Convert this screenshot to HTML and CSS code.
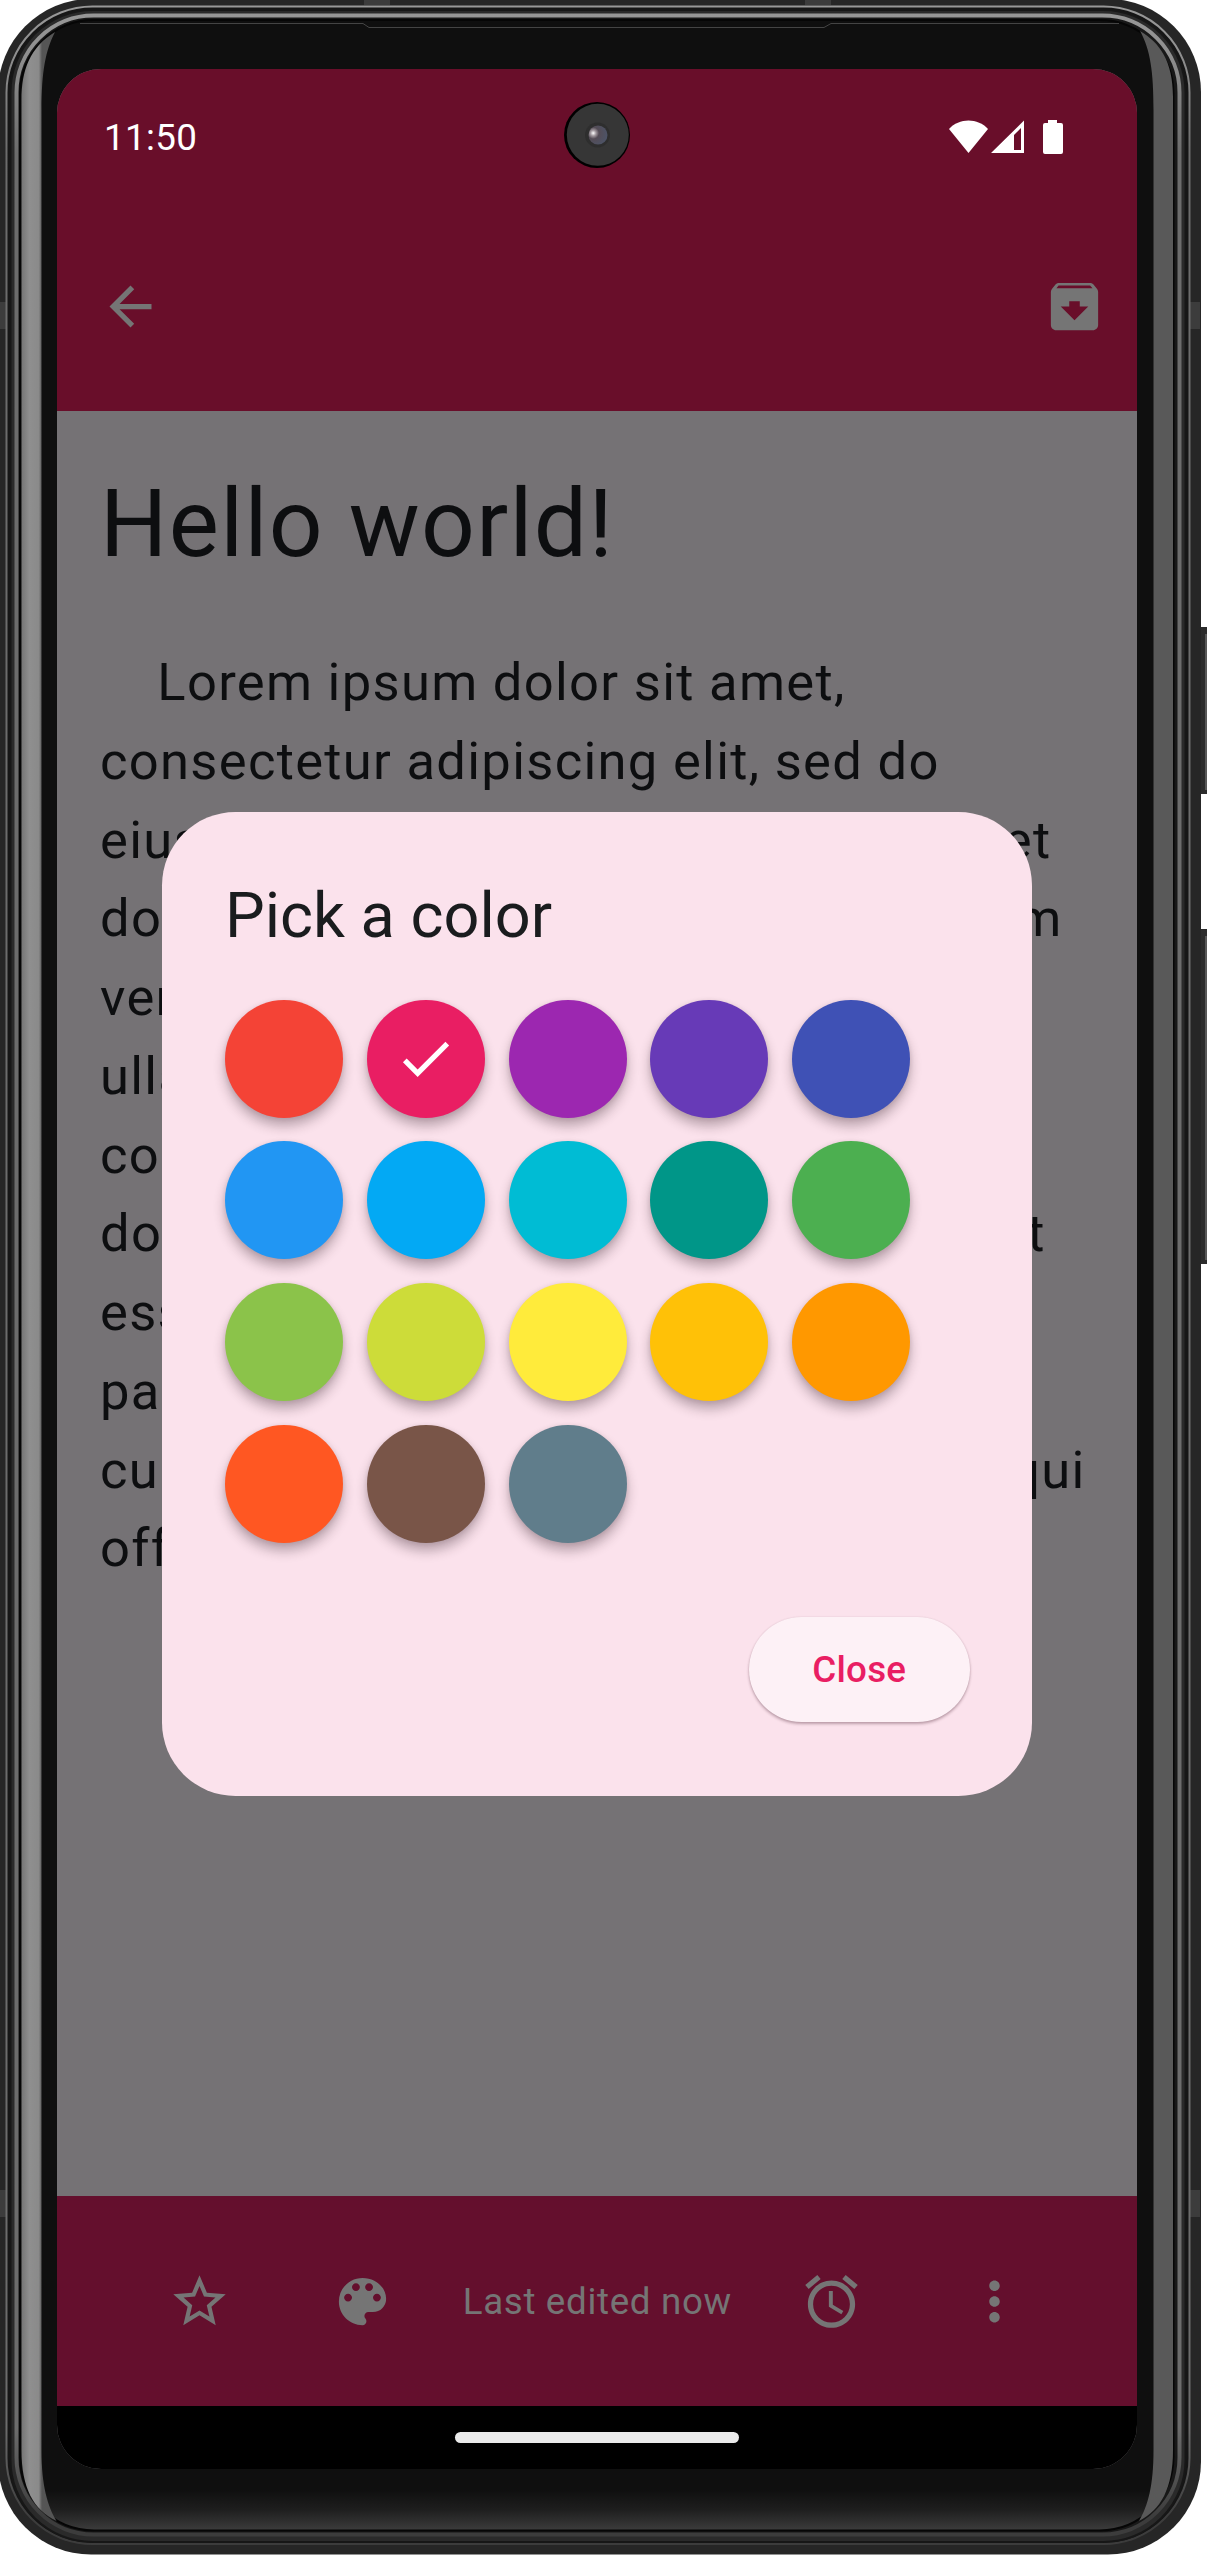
FILE: index.html
```html
<!DOCTYPE html>
<html lang="en">
<head>
<meta charset="utf-8">
<title>Note color picker</title>
<link rel="stylesheet" href="styles.css">
</head>
<body>
<div class="device">
  <svg class="frame" viewBox="0 0 1207 2555" aria-hidden="true">
    <defs>
      <linearGradient id="chin" x1="0" y1="2490" x2="0" y2="2529" gradientUnits="userSpaceOnUse">
        <stop offset="0" stop-color="#0f0f0f"/><stop offset=".5" stop-color="#1e1e1e"/><stop offset="1" stop-color="#3a3a3a"/>
      </linearGradient>
      <linearGradient id="glassL" x1="21" y1="0" x2="42" y2="0" gradientUnits="userSpaceOnUse">
        <stop offset="0" stop-color="#747474"/><stop offset=".4" stop-color="#8f8f8f"/><stop offset=".85" stop-color="#8a8a8a"/><stop offset="1" stop-color="#555"/>
      </linearGradient>
      <linearGradient id="rail" x1="0" y1="0" x2="0" y2="2555" gradientUnits="userSpaceOnUse">
        <stop offset="0" stop-color="#999"/><stop offset=".02" stop-color="#909090"/><stop offset=".06" stop-color="#6c6c6c"/><stop offset=".95" stop-color="#6c6c6c"/><stop offset=".985" stop-color="#3c3c3c"/>
      </linearGradient>
      <radialGradient id="lens" cx=".25" cy=".4" r=".8">
        <stop offset="0" stop-color="#fff"/><stop offset=".18" stop-color="#a39aa0"/><stop offset=".38" stop-color="#544c56"/><stop offset="1" stop-color="#4c5468"/>
      </radialGradient>
    </defs>
    <path d="M1198 627h9v167h-9zM1198 929h9v335h-9z" fill="#2c2c2c"/>
    <path d="M1205 634h2v156h-2zM1205 936h2v324h-2z" fill="#585858"/>
    <rect x="-2" y="-1" width="1203" height="2555.500" rx="93" fill="#262626"/>
    <path d="M0 302h6v27H0zM0 2190h6v27H0zM1190 302h10v27h-10zM1190 2190h10v27h-10zM364 0h26v5h-26zM805 0h26v5h-26z" fill="#3c3c3c"/>
    <rect x="6.500" y="6.500" width="1183" height="2537.500" rx="86" fill="#161616" stroke="url(#rail)" stroke-width="2"/>
    <rect x="10.500" y="10" width="1175" height="2532" rx="82" fill="#2a2a2a" stroke="#171717" stroke-width="2"/>
    <rect x="16.500" y="15.500" width="1163" height="2519" rx="77" fill="#181818" stroke="url(#rail)" stroke-width="4"/>
    <rect x="20" y="20" width="1153.500" height="2510.500" rx="74" fill="url(#chin)" stroke="#060606" stroke-width="2"/>
    <path d="M55 32C30 47 21.500 70 21.500 100V2450c0 38 12 60 35 71-9-15-15-36-15-70V110c0-38 4-60 13.500-78z" fill="url(#glassL)"/>
    <path d="M1140 31c20 12 33 30 33 66V2450c0 38-12 60-34 71 9-15 14.500-36 14.500-70V110c0-38-3-60-13.500-79z" fill="#595959"/>
    <path d="M80 23.500H363l6 4H824l7-4h288" fill="none" stroke="#444"/>
  </svg>

  <main class="screen">
    <header class="top">
      <div class="status">
        <span class="time">11:50</span>
        <svg class="status-icons" viewBox="0 0 115 36">
          <path d="M0 10C10-1.500 29-1.500 39 10L19.500 34z"/>
          <path fill-rule="evenodd" d="M42 34L75 1.500V34zM65 31H72V9L65 16z"/>
          <path d="M99 1h9v3h4q2 0 2 2v27q0 2-2 2H96q-2 0-2-2V6q0-2 2-2h3z"/>
        </svg>
      </div>
      <div class="toolbar">
        <svg class="icon" viewBox="0 0 24 24"><path d="M20 11H7.830l5.590-5.590L12 4l-8 8 8 8 1.410-1.410L7.830 13H20v-2z"/></svg>
        <svg class="icon" viewBox="0 0 24 24"><path d="M20.540 5.230l-1.390-1.680C18.880 3.210 18.470 3 18 3H6c-.47 0-.88.21-1.160.55L3.460 5.230C3.170 5.570 3 6.020 3 6.500V19c0 1.100.9 2 2 2h14c1.100 0 2-.9 2-2V6.500c0-.48-.17-.93-.46-1.270zM12 17.250L6.750 12H10v-2h4v2h3.250L12 17.250zM5.120 5l.81-1h12l.94 1H5.120z"/></svg>
      </div>
    </header>

    <article class="note">
      <h1 class="note-title">Hello world!</h1>
      <p class="note-body">    Lorem ipsum dolor sit amet,
consectetur adipiscing elit, sed do
eiusmod tempor incididunt ut labore et
dolore magna aliqua. Ut enim ad minim
veniam, quis nostrud exercitation
ullamco laboris nisi ut aliquip ex ea
commodo consequat. Duis aute irure
dolor in reprehenderit in voluptate velit
esse cillum dolore eu fugiat nulla
pariatur. Excepteur sint occaecat
cupidatat non proident, sunt in culpa qui
officia deserunt mollit anim</p>
    </article>

    <footer class="bottom">
      <span class="action"><svg class="icon" viewBox="0 0 24 24"><path d="M22 9.240l-7.190-.62L12 2 9.190 8.630 2 9.240l5.460 4.730L5.820 21 12 17.270 18.180 21l-1.630-7.030L22 9.240zM12 15.400l-3.760 2.270 1-4.280-3.320-2.880 4.380-.38L12 6.100l1.710 4.040 4.380.38-3.320 2.880 1 4.280L12 15.400z"/></svg></span>
      <span class="action"><svg class="icon" viewBox="0 0 24 24"><path d="M12 3c-4.970 0-9 4.030-9 9s4.030 9 9 9c.83 0 1.500-.67 1.500-1.500 0-.39-.15-.74-.39-1.010-.23-.26-.38-.61-.38-.99 0-.83.67-1.500 1.500-1.500H16c2.760 0 5-2.240 5-5 0-4.420-4.030-8-9-8zm-5.500 9c-.83 0-1.500-.67-1.500-1.500S5.670 9 6.500 9 8 9.670 8 10.500 7.330 12 6.500 12zm3-4C8.670 8 8 7.330 8 6.500S8.670 5 9.500 5s1.500.67 1.500 1.500S10.330 8 9.500 8zm5 0c-.83 0-1.500-.67-1.500-1.500S13.670 5 14.500 5s1.500.67 1.500 1.500S15.330 8 14.500 8zm3 4c-.83 0-1.500-.67-1.500-1.500S16.670 9 17.500 9s1.500.67 1.500 1.500-.67 1.500-1.500 1.500z"/></svg></span>
      <span class="edited">Last edited now</span>
      <span class="action"><svg class="icon" viewBox="0 0 24 24"><path d="M22 5.720l-4.600-3.860-1.290 1.530 4.600 3.860L22 5.720zM7.880 3.390L6.600 1.860 2 5.710l1.290 1.530 4.590-3.850zM12.500 8H11v6l4.750 2.850.75-1.230-4-2.370V8zM12 4c-4.970 0-9 4.030-9 9s4.020 9 9 9c4.970 0 9-4.030 9-9s-4.030-9-9-9zm0 16c-3.870 0-7-3.130-7-7s3.130-7 7-7 7 3.130 7 7-3.130 7-7 7z"/></svg></span>
      <span class="action"><svg class="icon" viewBox="0 0 24 24"><path d="M12 8c1.100 0 2-.9 2-2s-.9-2-2-2-2 .9-2 2 .9 2 2 2zm0 2c-1.100 0-2 .9-2 2s.9 2 2 2 2-.9 2-2-.9-2-2-2zm0 6c-1.100 0-2 .9-2 2s.9 2 2 2 2-.9 2-2-.9-2-2-2z"/></svg></span>
    </footer>
    <div class="nav"><span class="pill"></span></div>
  </main>

  <svg class="camera" viewBox="0 0 66 66" aria-hidden="true">
    <circle cx="33" cy="33" r="33" fill="#000"/>
    <circle cx="33.800" cy="32.800" r="31" fill="#363636"/>
    <circle cx="33.500" cy="33" r="12.500" fill="#2e2e2e"/>
    <circle cx="34" cy="33" r="9.500" fill="url(#lens)"/>
  </svg>

  <section class="dialog">
    <h2 class="dialog-title">Pick a color</h2>
    <div class="swatches">
      <span class="swatch red"></span>
      <span class="swatch pink"><svg class="check" viewBox="0 0 24 24"><path d="M9 16.170L4.830 12l-1.420 1.410L9 19 21 7l-1.410-1.410z"/></svg></span>
      <span class="swatch purple"></span>
      <span class="swatch deep-purple"></span>
      <span class="swatch indigo"></span>
      <span class="swatch blue"></span>
      <span class="swatch light-blue"></span>
      <span class="swatch cyan"></span>
      <span class="swatch teal"></span>
      <span class="swatch green"></span>
      <span class="swatch light-green"></span>
      <span class="swatch lime"></span>
      <span class="swatch yellow"></span>
      <span class="swatch amber"></span>
      <span class="swatch orange"></span>
      <span class="swatch deep-orange"></span>
      <span class="swatch brown"></span>
      <span class="swatch blue-grey"></span>
    </div>
    <button class="close">Close</button>
  </section>
</div>
</body>
</html>
```
FILE: styles.css
```css
* { box-sizing: border-box; }

body {
  margin: 0;
  background: #fff;
  font-family: Roboto, "Liberation Sans", sans-serif;
}

.device {
  position: relative;
  width: 1207px;
  height: 2555px;
  padding: 69px 70px 86px 57px;
  overflow: hidden;
}

.frame {
  position: absolute;
  inset: 0;
  width: 1207px;
  height: 2555px;
}

.screen {
  position: relative;
  display: flex;
  flex-direction: column;
  height: 2400px;
  border-radius: 44px;
  overflow: hidden;
  background: #757275;
}

.top {
  height: 342px;
  background: #690e2a;
}

.status {
  display: flex;
  justify-content: space-between;
  align-items: center;
  height: 136px;
  padding: 0 73px 0 47px;
}

.time {
  color: #fff;
  font-size: 36.750px;
  letter-spacing: .350px;
}

.status-icons {
  width: 115px;
  height: 36px;
  fill: #fff;
}

.toolbar {
  display: flex;
  justify-content: space-between;
  align-items: center;
  height: 203px;
  padding: 0 31.500px 0 42px;
}

.icon {
  display: block;
  width: 63px;
  height: 63px;
  fill: #757575;
}

.note {
  flex: 1;
  padding: 57px 42px 0 43px;
  color: #0d0e10;
}

.note-title {
  margin: 0 0 64px;
  font-size: 94.500px;
  line-height: 111px;
  font-weight: 400;
  letter-spacing: 1.310px;
}

.note-body {
  margin: 0;
  font-size: 52.500px;
  line-height: 78.750px;
  letter-spacing: 1.310px;
  white-space: pre;
}

.bottom {
  display: flex;
  align-items: center;
  justify-content: center;
  gap: 37.200px;
  height: 210px;
  background: #640f2d;
}

.action {
  display: flex;
  align-items: center;
  justify-content: center;
  width: 126px;
  height: 126px;
}

.edited {
  width: 268.600px;
  color: #757575;
  font-size: 36.750px;
  letter-spacing: .656px;
  white-space: nowrap;
}

.nav {
  display: flex;
  align-items: center;
  justify-content: center;
  height: 63px;
  background: #000;
}

.pill {
  width: 284px;
  height: 11px;
  border-radius: 6px;
  background: #ebebeb;
}

.camera {
  position: absolute;
  left: 564px;
  top: 102px;
  width: 66px;
  height: 66px;
}

/* Modal over the dimmed note */
.dialog {
  position: absolute;
  left: 162px;
  top: 811.500px;
  width: 870px;
  height: 984px;
  padding: 62px 62.500px 63px 63px;
  display: flex;
  flex-direction: column;
  border-radius: 73.500px;
  background: #fbe2ec;
}

.dialog-title {
  margin: 0 0 42px;
  color: #1a1c1e;
  font-size: 63px;
  line-height: 84px;
  font-weight: 400;
}

.swatches {
  display: grid;
  grid-template-columns: repeat(5, 118.125px);
  gap: 23.625px;
}

.swatch {
  display: flex;
  align-items: center;
  justify-content: center;
  height: 118.125px;
  border-radius: 50%;
  box-shadow: 0 8px 12px rgba(40, 20, 30, .30), 0 1px 5px rgba(40, 20, 30, .10);
}

.check {
  width: 63px;
  height: 63px;
  fill: #fff;
}

.red { background: #f44336; }
.pink { background: #e91e63; }
.purple { background: #9c27b0; }
.deep-purple { background: #673ab7; }
.indigo { background: #3f51b5; }
.blue { background: #2196f3; }
.light-blue { background: #03a9f4; }
.cyan { background: #00bcd4; }
.teal { background: #009688; }
.green { background: #4caf50; }
.light-green { background: #8bc34a; }
.lime { background: #cddc39; }
.yellow { background: #ffeb3b; }
.amber { background: #ffc107; }
.orange { background: #ff9800; }
.deep-orange { background: #ff5722; }
.brown { background: #795548; }
.blue-grey { background: #607d8b; }

.close {
  align-self: flex-end;
  width: 220.500px;
  height: 105px;
  margin-top: 74.500px;
  padding: 0;
  border: 0;
  border-radius: 53px;
  background: #fdf1f6;
  color: #e91e63;
  font: 500 36.750px/105px Roboto, "Liberation Sans", sans-serif;
  letter-spacing: .260px;
  box-shadow: 0 2px 3px rgba(60, 20, 35, .32), 0 0 2px rgba(60, 20, 35, .10);
}
```
